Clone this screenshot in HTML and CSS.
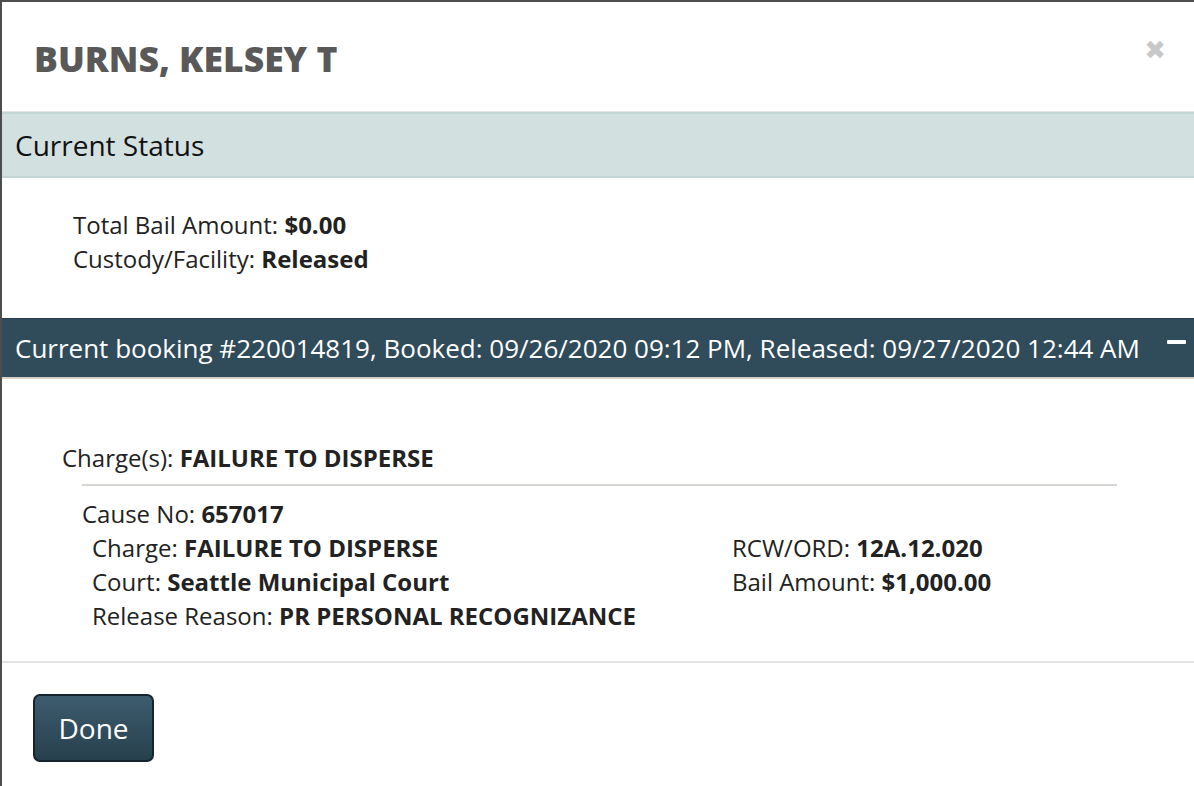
FILE: index.html
```html
<!DOCTYPE html>
<html>
<head>
<meta charset="utf-8">
<link rel="stylesheet" href="styles.css">
</head>
<body>
<div class="modal">
  <div class="modal-header">
    <h1 class="title">BURNS, KELSEY T</h1>
    <span class="close">&#x2716;</span>
  </div>
  <div class="status-bar">Current Status</div>
  <div class="status-body">
    <div class="line">Total Bail Amount: <b>$0.00</b></div>
    <div class="line">Custody/Facility: <b>Released</b></div>
  </div>
  <div class="booking-bar">
    <span>Current booking #220014819, Booked: 09/26/2020 09:12 PM, Released: 09/27/2020 12:44 AM</span>
    <span class="minus"></span>
  </div>
  <div class="booking-body">
    <div class="line charges">Charge(s): <b>FAILURE TO DISPERSE</b></div>
    <div class="charge-block">
      <div class="line">Cause No: <b>657017</b></div>
      <div class="charge-grid">
        <div class="col">
          <div class="line">Charge: <b>FAILURE TO DISPERSE</b></div>
          <div class="line">Court: <b>Seattle Municipal Court</b></div>
          <div class="line">Release Reason: <b>PR PERSONAL RECOGNIZANCE</b></div>
        </div>
        <div class="col">
          <div class="line">RCW/ORD: <b>12A.12.020</b></div>
          <div class="line">Bail Amount: <b>$1,000.00</b></div>
        </div>
      </div>
    </div>
  </div>
  <div class="footer">
    <button class="done">Done</button>
  </div>
</div>
</body>
</html>
```
FILE: styles.css
```css
html, body {
  margin: 0;
  padding: 0;
}
body {
  background: #4d4d4d;
  font-family: "Open Sans", "DejaVu Sans", sans-serif;
  color: #222;
  overflow: hidden;
  height: 786px;
}
.modal {
  margin: 2px 0 0 2px;
  background: #fff;
  height: 784px;
  width: 1200px;
}
.modal-header {
  height: 110px;
  display: flex;
  align-items: center;
  justify-content: space-between;
  padding: 0 28px 0 32px;
  border-bottom: 1px solid #e5e5e5;
  box-sizing: border-box;
  width: 1192px;
}
.title {
  margin: 0;
  font-size: 35.5px;
  font-weight: 800;
  color: #595959;
  letter-spacing: 0;
  padding-top: 2px;
}
.close {
  color: #c8c8c8;
  font-size: 26px;
  font-family: "DejaVu Sans", sans-serif;
  margin-top: -14px;
}
.status-bar {
  height: 62px;
  background: #d3e0e0;
  border-top: 2px solid #c3d6d3;
  border-bottom: 2px solid #c3d6d3;
  display: flex;
  align-items: center;
  padding-left: 13px;
  font-size: 28px;
  color: #111;
}
.status-body {
  padding: 30px 0 42px 71px;
}
.line {
  font-size: 24px;
  line-height: 34px;
}
.line b {
  font-weight: 700;
}
.booking-bar {
  background: #304b59;
  border-top: 1px solid #253e4a;
  border-bottom: 2px solid #d9d0c7;
  display: flex;
  align-items: center;
  justify-content: space-between;
  padding: 0 8px 0 13px;
  color: #fff;
  font-size: 26px;
  width: 1192px;
  box-sizing: border-box;
  height: 61px;
}
.minus {
  width: 19px;
  height: 4px;
  background: #fff;
  border-radius: 1px;
  margin-top: -12px;
}
.booking-body {
  padding: 62px 0 28px 60px;
  border-bottom: 2px solid #e3e3e3;
}
.charge-block {
  margin-left: 20px;
  width: 1035px;
  border-top: 2px solid #d6d6d2;
  margin-top: 9px;
  padding-top: 11px;
}
.charge-grid {
  display: grid;
  grid-template-columns: 640px 1fr;
  padding-left: 10px;
}
.footer {
  padding: 31px 0 0 31px;
}
.done {
  width: 121px;
  height: 68px;
  border-radius: 7px;
  border: 2px solid #14232c;
  background: linear-gradient(#3d5c6e, #27404e);
  color: #fff;
  font-family: "Open Sans", sans-serif;
  font-size: 28px;
  padding: 0;
}
```
